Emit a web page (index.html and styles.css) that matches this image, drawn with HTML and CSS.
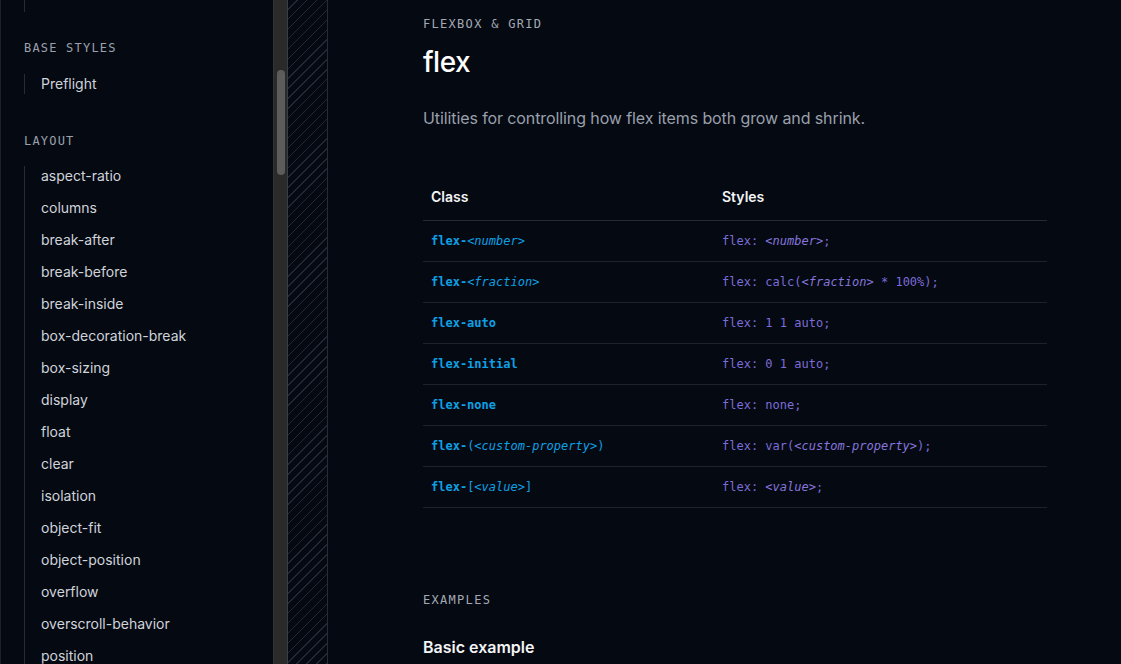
FILE: index.html
```html
<!DOCTYPE html>
<html lang="en">
<head>
<meta charset="utf-8">
<title>flex</title>
<link rel="stylesheet" href="styles.css">
</head>
<body>
<div class="app">
  <aside class="sidebar">
    <div class="nav-tail"></div>
    <section class="nav-group">
      <h3 class="nav-title">Base Styles</h3>
      <ul class="nav-list">
        <li>Preflight</li>
      </ul>
    </section>
    <section class="nav-group">
      <h3 class="nav-title">Layout</h3>
      <ul class="nav-list">
        <li>aspect-ratio</li>
        <li>columns</li>
        <li>break-after</li>
        <li>break-before</li>
        <li>break-inside</li>
        <li>box-decoration-break</li>
        <li>box-sizing</li>
        <li>display</li>
        <li>float</li>
        <li>clear</li>
        <li>isolation</li>
        <li>object-fit</li>
        <li>object-position</li>
        <li>overflow</li>
        <li>overscroll-behavior</li>
        <li>position</li>
      </ul>
    </section>
  </aside>
  <div class="scrollbar"><div class="thumb"></div></div>
  <div class="hatch"></div>
  <main class="main">
    <p class="eyebrow">Flexbox &amp; Grid</p>
    <h1 class="title">flex</h1>
    <p class="lead">Utilities for controlling how flex items both grow and shrink.</p>

    <table class="ref">
      <thead>
        <tr><th class="c1">Class</th><th>Styles</th></tr>
      </thead>
      <tbody>
        <tr><td class="cls">flex-<i>&lt;number&gt;</i></td><td class="sty">flex: <i>&lt;number&gt;</i>;</td></tr>
        <tr><td class="cls">flex-<i>&lt;fraction&gt;</i></td><td class="sty">flex: calc(<i>&lt;fraction&gt;</i> * 100%);</td></tr>
        <tr><td class="cls">flex-auto</td><td class="sty">flex: 1 1 auto;</td></tr>
        <tr><td class="cls">flex-initial</td><td class="sty">flex: 0 1 auto;</td></tr>
        <tr><td class="cls">flex-none</td><td class="sty">flex: none;</td></tr>
        <tr><td class="cls">flex-<span class="n">(</span><i>&lt;custom-property&gt;</i><span class="n">)</span></td><td class="sty">flex: var(<i>&lt;custom-property&gt;</i>);</td></tr>
        <tr><td class="cls">flex-<span class="n">[</span><i>&lt;value&gt;</i><span class="n">]</span></td><td class="sty">flex: <i>&lt;value&gt;</i>;</td></tr>
      </tbody>
    </table>

    <p class="eyebrow examples">Examples</p>
    <h2 class="subtitle">Basic example</h2>
  </main>
</div>
</body>
</html>
```

FILE: styles.css
```css
* { box-sizing: border-box; }
html, body { margin: 0; padding: 0; }
body {
  background: #050912;
  color: #fff;
  font-family: Inter, "Noto Sans", sans-serif;
  height: 664px;
  overflow: hidden;
}
.app {
  display: flex;
  height: 664px;
}
.sidebar {
  width: 273px;
  flex: none;
  border-left: 1px solid #1c212b;
  padding-left: 23px;
  overflow: hidden;
}
.nav-tail {
  height: 12px;
  border-left: 1px solid #262b35;
}
.nav-group { margin-top: 28px; }
.nav-group + .nav-group { margin-top: 39px; }
.nav-title {
  margin: 0 0 18px 0;
  font-family: "DejaVu Sans Mono", "Liberation Mono", monospace;
  font-weight: 400;
  font-size: 12px;
  line-height: 16px;
  letter-spacing: 1.2px;
  text-transform: uppercase;
  color: #9aa1ad;
}
.nav-group + .nav-group .nav-title { margin-bottom: 17px; }
.nav-list {
  list-style: none;
  margin: 0;
  padding: 0;
  border-left: 1px solid #262b35;
}
.nav-list li {
  padding-left: 16px;
  font-size: 14px;
  line-height: 20px;
  color: #d0d4da;
  margin-bottom: 12px;
}
.nav-list li:last-child { margin-bottom: 0; }
.scrollbar {
  width: 15px;
  flex: none;
  background: #2a2a2a;
  border-left: 1px solid #333;
  border-right: 1px solid #3a3d44;
  padding: 70px 2px 0 3px;
}
.thumb {
  height: 105px;
  border-radius: 5px;
  background: #5c5c5c;
}
.hatch {
  width: 40px;
  flex: none;
  border-right: 1px solid #272c36;
  background-image: repeating-linear-gradient(
    -45deg,
    rgba(140, 150, 175, 0.22) 0 1px,
    transparent 1px 7px
  );
}
.main {
  flex: 1;
  padding: 16px 0 0 95px;
}
.eyebrow {
  margin: 0;
  font-family: "DejaVu Sans Mono", "Liberation Mono", monospace;
  font-size: 12px;
  line-height: 16px;
  letter-spacing: 1.3px;
  text-transform: uppercase;
  color: #a3a9b4;
}
.title {
  margin: 12px 0 0 0;
  font-size: 28px;
  line-height: 36px;
  font-weight: 500;
  letter-spacing: -0.5px;
  color: #fff;
}
.lead {
  margin: 24px 0 0 0;
  font-size: 16px;
  line-height: 28px;
  letter-spacing: -0.1px;
  color: #99a0ac;
}
.ref {
  margin-top: 46px;
  width: 624px;
  border-collapse: collapse;
}
.ref th {
  text-align: left;
  font-size: 14px;
  font-weight: 600;
  color: #f3f4f6;
  padding: 9px 8px 13px 8px;
  line-height: 20px;
  border-bottom: 1px solid #252a33;
}
.ref th.c1 { width: 291px; }
.ref td {
  height: 41px;
  padding: 0 8px;
  border-bottom: 1px solid #1d222b;
  font-family: "DejaVu Sans Mono", "Liberation Mono", monospace;
  font-size: 12px;
  line-height: 16px;
  vertical-align: middle;
}
.ref td i { font-style: italic; font-weight: 400; }
.cls { color: #0ea0e4; font-weight: 600; }
.cls .n { font-weight: 400; }
.sty { color: #7c6cd8; }
.sty i { color: #8676dc; }
.examples { margin-top: 84px; }
.subtitle {
  margin: 27px 0 0 0;
  font-size: 16px;
  line-height: 24px;
  font-weight: 600;
  color: #f3f4f6;
}
```
